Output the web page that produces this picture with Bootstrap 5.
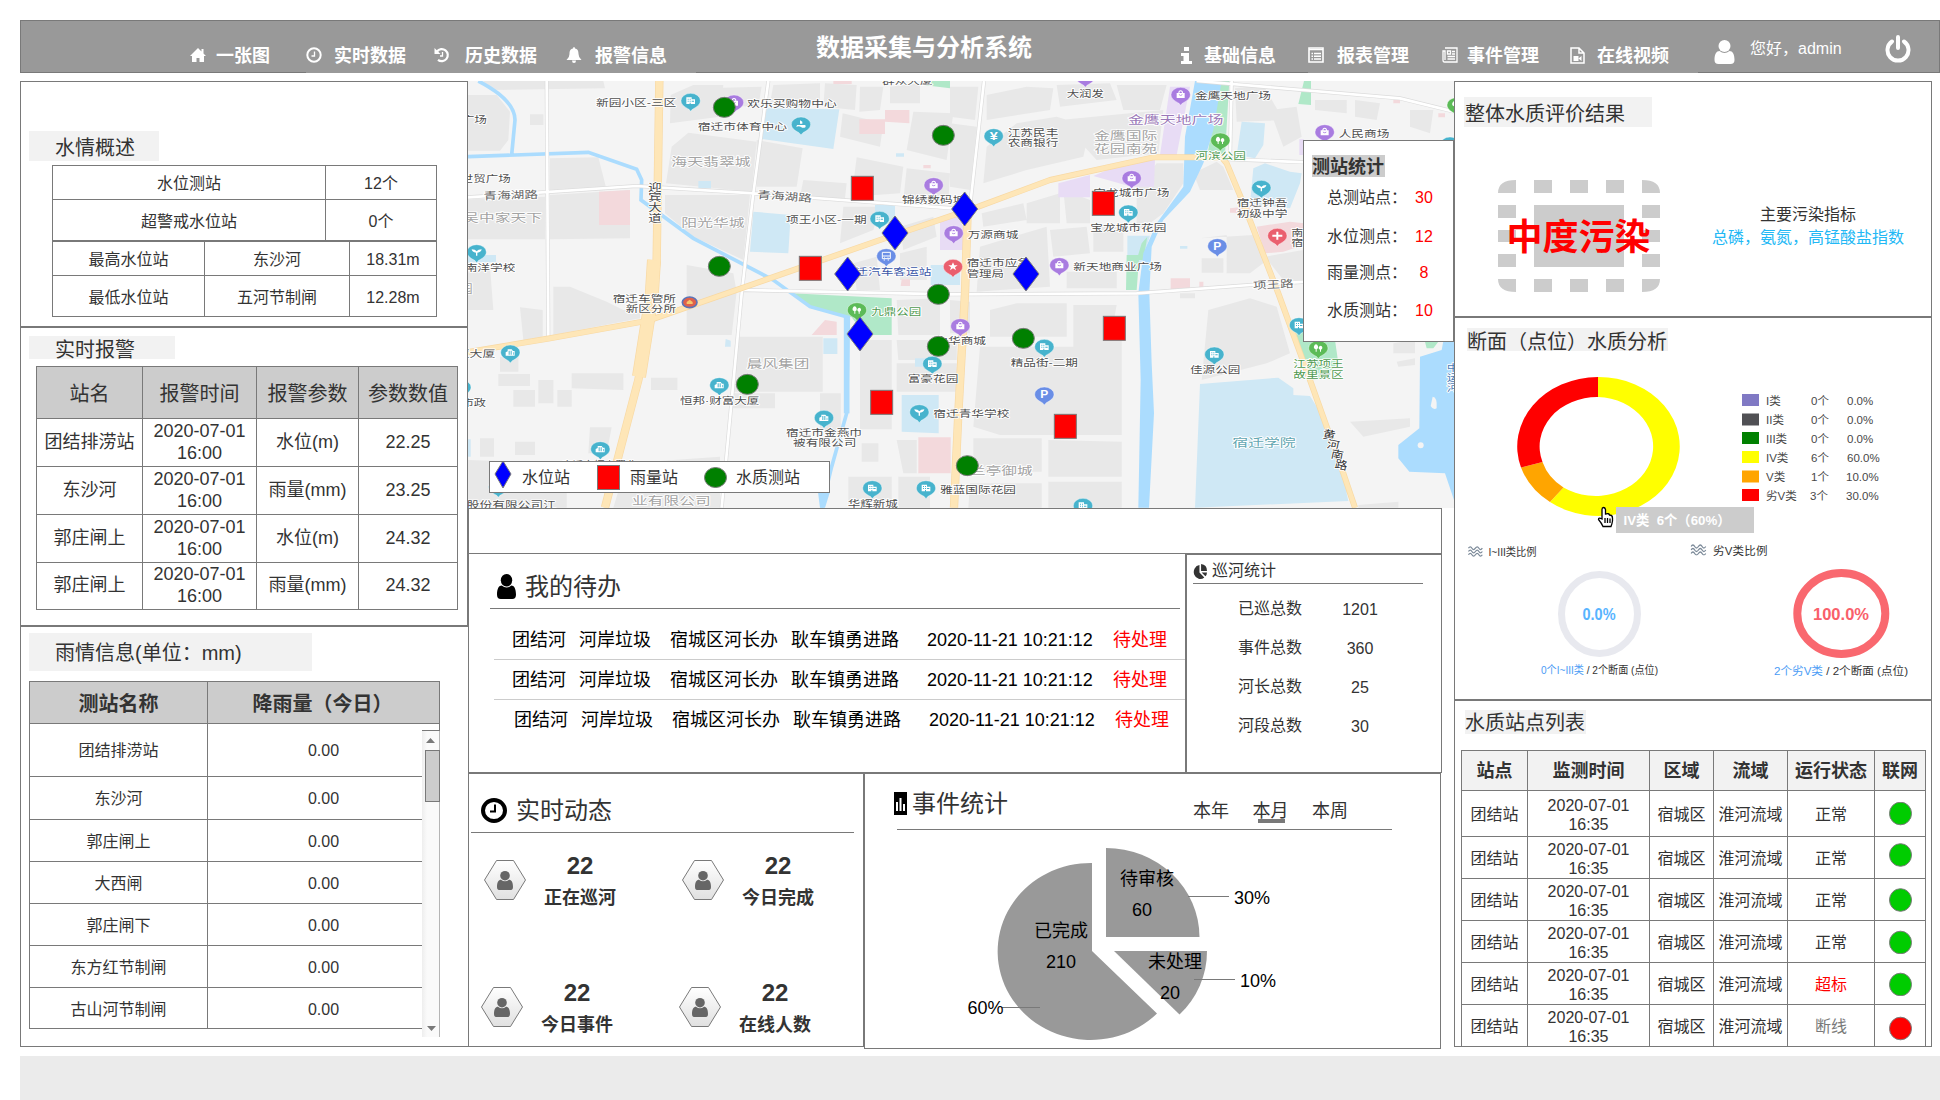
<!DOCTYPE html>
<html lang="zh-CN">
<head>
<meta charset="utf-8">
<title>数据采集与分析系统</title>
<link href="https://cdn.jsdelivr.net/npm/bootstrap@5.3.0/dist/css/bootstrap.min.css" rel="stylesheet">
<style>
:root{--line:#797979}
body{width:1940px;height:1100px;overflow:hidden;background:#fff;color:#333;font:16px/20px "Liberation Sans","Noto Sans CJK SC",sans-serif}
svg{display:block}
svg text{font-family:"Liberation Sans","Noto Sans CJK SC",sans-serif}
.topbar{margin:20px 0 0 20px;width:1920px;height:53px;background:#999;border:1px solid var(--line);color:#fff;display:grid;grid-template-columns:795px 331px 794px;padding:0}
.topnav{display:grid;align-items:center;height:68px;font-size:18px;font-weight:700;white-space:nowrap}
.topnav span{padding-top:2px}
.nav-a{grid-template-columns:26px 90px 28px 100px 31px 101px 29px 74px;padding-left:169px}
.nav-b{grid-template-columns:24px 104px 29px 105px 25px 103px 27px 117px 36px 135px 30px;padding-left:33px}
.nav-a,.nav-b{position:relative}
.nav-a:after,.nav-b:after{content:"";position:absolute;top:51px;height:1px;width:390px;background:#999}
.nav-a:after{left:285px}.nav-b:after{left:161px}
.topnav .hello{font-size:16px;font-weight:400;margin-top:-15px}
.lift{margin-top:-6px}.lift2{margin-top:-13px}
.sysname{font-size:24px;font-weight:700;line-height:54px;white-space:nowrap;height:50px}
.boards{margin:8px 0 0 20px;height:975px}
.pane{border:1px solid var(--line);background:#fff}
.col-l{width:448px}.col-m{width:986px}.col-r{width:478px}
.tag{background:#f2f2f2;font-size:20px;white-space:nowrap;width:max-content}
.lined{border-collapse:separate;border-spacing:1px;background:var(--line);table-layout:fixed;text-align:center}
.lined td,.lined th{background:#fff;padding:2px 0 0;vertical-align:middle;white-space:nowrap}
.lined .hd td,.lined .hd th{background:#ccc;font-size:20px}
.t-level td{line-height:20px}
.lined.t-level tr+tr td{padding-top:4px}
.t-alarm{font-size:18px;line-height:22px}
.lined.t-alarm td{padding:0 0 2px}
.lined.t-alarm .hd td{padding:2px 0 0}
.lined.t-site .hd th{background:#f2f2f2;font-size:18px}
.t-site{line-height:19px}
.t-site svg{margin-top:-2px}
.rainwrap{position:relative;width:411px;margin:10px 0 0 8px}
.sbar{position:absolute;left:393px;top:50px;width:18px;height:306px;background:linear-gradient(90deg,#eee,#fafafa 30%);border-right:1px solid #b5b5b5;box-shadow:0 -1px #797979}
.gone{position:absolute;right:0;top:43px;width:1px;height:8px;background:var(--line)}
.mapbox{width:986px;height:427px;position:relative;overflow:hidden}
.stats{position:absolute;left:835px;top:59px;width:151px;height:202px;padding:14px 0 0 8px}
.stats h6{font-size:18px;font-weight:700;background:#ccc;width:73px;height:22px;line-height:24px;margin:0 0 11px;white-space:nowrap}
.stats .r{display:grid;grid-template-columns:80px 34px;padding-left:15px;height:37.5px;line-height:20px;white-space:nowrap}
.stats b{font-weight:400;color:red;text-align:center}
.legend{position:absolute;left:21px;top:380px;width:341px;height:32px;display:grid;grid-template-columns:32px 75px 33px 74px 32px 66px;line-height:32px;white-space:nowrap}
.spacer{width:974px;height:46px;border-bottom:0}
.todo{width:718px;height:219px}
.patrol{width:256px;height:219px}
.h24{font-size:24px;line-height:28px;white-space:nowrap}
.todo .r{display:grid;grid-template-columns:67px 91px 121px 136px 186px 60px;font-size:18px;color:#000;height:40px;line-height:41px;margin-left:25px;padding-left:18px;border-bottom:1px solid #ccc;white-space:nowrap}
.todo .r:last-child{border:0;padding-left:20px}
.todo .r b{font-weight:400;color:red}
.patrol .r{display:grid;grid-template-columns:84px 76px;margin-left:51px;height:39.2px;align-items:center}
.patrol .r span:last-child{text-align:center;padding-top:2px}
.live{width:396px;height:274px}
.event{width:577px;height:276px}
.who{display:grid;grid-template-columns:42px 108px;height:127px}
.who .n{font-size:24px;font-weight:700;line-height:26px;text-align:center}
.who .l{font-size:18px;font-weight:700;line-height:22px;text-align:center;margin-top:8px;white-space:nowrap}
.tabs3{font-size:18px;width:155px}
.tabs3 span{position:relative;white-space:nowrap}
.tabs3 .on:after{content:"";position:absolute;left:5px;top:18px;width:27px;height:4px;background:var(--line)}
.foot{margin-left:20px;height:44px;background:#ebebeb}
</style>
</head>
<body>
<svg width="0" height="0" class="position-absolute">
<defs>
<symbol id="man" viewBox="0 0 20 24"><ellipse cx="10" cy="6" rx="6" ry="6"/><path d="M0 20C0 14 2 11 5 11Q10 15 15 11C18 11 20 14 20 20Q20 24 16 24H4Q0 24 0 20Z"/></symbol>
<linearGradient id="hexg" x1="0" y1="0" x2="0" y2="1"><stop offset="0" stop-color="#fff"/><stop offset="1" stop-color="#e0e0e0"/></linearGradient>
<symbol id="hex" viewBox="0 0 42 40"><path d="M12.500.5H29.500L41.500 20 29.500 39.500H12.500L.5 20Z" fill="url(#hexg)" stroke="#797979"/><use href="#man" x="13" y="10" width="16" height="21" fill="#666"/></symbol>
<symbol id="wave" viewBox="0 0 16 12"><path d="M.5 3q2-3 3.700 0t3.700 0 3.700 0 3.700 0M.5 6.500q2-3 3.700 0t3.700 0 3.700 0 3.700 0M.5 10q2-3 3.700 0t3.700 0 3.700 0 3.700 0" fill="none" stroke="#7c8a99" stroke-width="1.300"/></symbol>
</defs>
</svg>

<header class="topbar">
  <nav class="topnav nav-a">
    <svg width="16" height="16" viewBox="0 0 16 16" fill="#fff"><path d="M8 1 0 9h2v6h4.500v-4h3v4H14V9h2l-2.500-2.500V2h-2v2.500Z"/></svg><span>一张图</span>
    <svg width="16" height="16" viewBox="0 0 16 16" fill="none" stroke="#fff"><circle cx="8" cy="8" r="6.700" stroke-width="2"/><path d="M8.500 4.500V9H5.500" stroke-width="1.300"/></svg><span>实时数据</span>
    <svg width="16" height="16" viewBox="0 0 16 16" fill="none" stroke="#fff"><path d="M3 4.500A6 6 0 1 1 4 12.800" stroke-width="2.200"/><path d="M.5 1v6h6Z" fill="#fff" stroke="none"/><path d="M8.500 5V9H6" stroke-width="1.300"/></svg><span>历史数据</span>
    <svg width="16" height="16" viewBox="0 0 16 16" fill="#fff"><path d="M8 0Q9 0 9 1.500C12 2 12.500 4.500 12.500 7Q12.500 10.500 15.500 13H.5Q3.500 10.500 3.500 7C3.500 4.500 4 2 7 1.500Q7 0 8 0ZM6 13.500h4Q10 16 8 16T6 13.500Z"/></svg><span>报警信息</span>
  </nav>
  <div class="sysname">数据采集与分析系统</div>
  <nav class="topnav nav-b">
    <svg width="13" height="17" viewBox="0 0 13 17" fill="#fff"><path d="M4 0h5v4H4ZM1 6h8v8h3v3H1v-3h2.500V9H1Z"/></svg><span>基础信息</span>
    <svg width="16" height="16" viewBox="0 0 16 16" fill="none" stroke="#fff"><path d="M1 1h14v14H1Z" stroke-width="1.600"/><path d="M1 2.500h14M3.500 6.500h1.500M6 6.500h7M3.500 9.200h1.500M6 9.200h7M3.500 12h1.500M6 12h7" stroke-width="1.500"/></svg><span>报表管理</span>
    <svg width="16" height="16" viewBox="0 0 16 16" fill="none" stroke="#fff" stroke-width="1.300"><path d="M3 1h12v14H2.500Q1 15 1 13V4h2V13M5.500 4h3v3h-3ZM10 4.500h3M10 7h3M5.500 9.500H13M5.500 12H13"/></svg><span>事件管理</span>
    <svg width="15" height="17" viewBox="0 0 15 17" fill="none" stroke="#fff" stroke-width="1.500"><path d="M1 1h8l5 5v10H1ZM9 1v5h5"/><path d="M3.500 9h5v5h-5ZM8.500 11.500l3-2.500v5Z" fill="#fff" stroke="none"/></svg><span>在线视频</span>
    <svg class="lift" width="21" height="24" fill="#fff"><use href="#man"/></svg><span class="hello">您好，admin</span>
    <svg class="lift2" width="26" height="28" viewBox="0 0 26 28" fill="none" stroke="#fff" stroke-width="4" stroke-linecap="round"><path d="M7 6.500A10.500 10.500 0 1 0 19 6.500M13 2V13"/></svg>
  </nav>
</header>

<main class="boards d-flex align-items-start">
  <section class="col-l">
    <div class="pane" style="height:246px">
      <div class="tag" style="margin:49px 0 4px 8px;width:130px;height:30px;line-height:34px;padding-left:26px">水情概述</div>
      <table class="lined t-level" style="width:385px;margin-left:31px"><colgroup><col style="width:272px"><col></colgroup>
        <tr style="height:33px"><td>水位测站</td><td>12个</td></tr><tr style="height:40px"><td>超警戒水位站</td><td>0个</td></tr></table>
      <table class="lined t-level" style="width:385px;margin-left:31px"><colgroup><col style="width:151px"><col style="width:144px"><col></colgroup>
        <tr style="height:33px"><td>最高水位站</td><td>东沙河</td><td>18.31m</td></tr><tr style="height:40px"><td>最低水位站</td><td>五河节制闸</td><td>12.28m</td></tr></table>
    </div>
    <div class="pane" style="height:299px">
      <div class="tag" style="margin:8px 0 7px 8px;width:146px;height:23px;line-height:28px;padding-left:26px">实时报警</div>
      <table class="lined t-alarm" style="width:422px;margin-left:15px"><colgroup><col style="width:105px"><col style="width:113px"><col style="width:101px"><col></colgroup>
        <tr class="hd" style="height:51px"><td>站名</td><td>报警时间</td><td>报警参数</td><td>参数数值</td></tr>
        <tr style="height:47px"><td>团结排涝站</td><td>2020-07-01<br>16:00</td><td>水位(m)</td><td>22.25</td></tr>
        <tr style="height:47px"><td>东沙河</td><td>2020-07-01<br>16:00</td><td>雨量(mm)</td><td>23.25</td></tr>
        <tr style="height:47px"><td>郭庄闸上</td><td>2020-07-01<br>16:00</td><td>水位(m)</td><td>24.32</td></tr>
        <tr style="height:46px"><td>郭庄闸上</td><td>2020-07-01<br>16:00</td><td>雨量(mm)</td><td>24.32</td></tr>
      </table>
    </div>
    <div class="pane border-end-0" style="height:421px">
      <div class="tag" style="margin:6px 0 0 8px;width:283px;height:38px;line-height:41px;padding-left:26px">雨情信息(单位：mm)</div>
      <div class="rainwrap">
        <table class="lined" style="width:411px"><colgroup><col style="width:177px"><col></colgroup>
          <tr class="hd" style="height:41px"><th>测站名称</th><th style="padding-right:2px">降雨量（今日）</th></tr></table>
        <table class="lined" style="width:395px;margin-top:-1px"><colgroup><col style="width:177px"><col></colgroup>
          <tr style="height:52px"><td>团结排涝站</td><td style="padding-left:16px">0.00</td></tr>
          <tr style="height:42px"><td>东沙河</td><td style="padding-left:16px">0.00</td></tr>
          <tr style="height:41px"><td>郭庄闸上</td><td style="padding-left:16px">0.00</td></tr>
          <tr style="height:41px"><td>大西闸</td><td style="padding-left:16px">0.00</td></tr>
          <tr style="height:41px"><td>郭庄闸下</td><td style="padding-left:16px">0.00</td></tr>
          <tr style="height:41px"><td>东方红节制闸</td><td style="padding-left:16px">0.00</td></tr>
          <tr style="height:40px"><td style="padding-top:4px">古山河节制闸</td><td style="padding:4px 0 0 16px">0.00</td></tr>
        </table>
        <i class="gone"></i>
        <div class="bg-white position-absolute" style="left:393px;top:43px;width:17px;height:7px"></div>
        <div class="sbar"><svg width="18" height="306"><path d="M4 12l4.500-5 4.500 5ZM5 295h9l-4.500 5Z" fill="#797979"/><rect x="3.500" y="19.500" width="14" height="51" fill="#ccc" stroke="#797979"/></svg></div>
      </div>
    </div>
  </section>

  <section class="col-m">
    <div class="mapbox">
      <svg width="986" height="427" viewBox="468 81 986 427">
        <rect x="468" y="81" width="986" height="427" fill="#f4f4f4"/>
        <g transform="translate(460 80) scale(.333333)">
          <g fill="#e8e8e8">
            <path d="M70 3H430L435 25 90 30ZM24 45H110L150 95 145 180 120 212H24ZM210 103H250V135H210ZM270 235 415 232 440 330 270 335ZM24 358 255 350V478H24ZM270 345 510 330V475L270 478ZM24 545 90 560 100 690H24ZM280 620H330L440 665 490 690 540 690V715L280 765ZM180 682 248 690V770L190 780Z"/>
            <path d="M635 200 685 158 890 185 875 335 618 310ZM615 345 870 345 850 540 700 470 615 400ZM680 555 820 580 830 635 815 765H680ZM835 770H1088V935H815ZM115 882H210V918H115ZM335 880H490V930L335 925ZM573 893H652V930H573ZM160 930H225V980H160ZM235 900H280V970H235ZM292 930H335V980H292ZM120 830H175V875H120ZM165 1085H225V1125H165ZM390 1042H455L440 1120H385ZM60 1075H102V1130H60Z"/>
            <path d="M632 45 700 15 790 15 780 110 630 130ZM730 25 905 20 895 80 735 75ZM940 15 1080 10 1080 60 1000 85 930 70ZM1095 10 1190 15 1185 90 1090 80ZM1200 20H1270L1260 90 1198 95ZM1290 20 1380 10V70H1290ZM1148 100 1270 130 1260 200 1140 170ZM1360 95 1480 100 1460 240 1340 210ZM890 180 1028 205 1010 320 890 320ZM1190 232 1330 260 1320 340 1175 350ZM1340 265 1470 280 1465 365 1330 360ZM1030 300 1160 310 1155 355 1020 350ZM1150 380 1260 380 1240 450 1140 490ZM1320 440 1420 410 1430 470 1330 510ZM1180 550 1250 530 1260 630 1190 630ZM1320 520 1400 500V600H1320ZM1310 660 1440 655V765H1315ZM1310 780H1490V840H1315ZM1200 780H1295V1048H1200ZM1310 850H1490V935H1310ZM1080 940H1142V1055H1080ZM820 940H945V985H810ZM500 1150 780 1130V1283H460ZM820 1165 1080 1165V1210H820ZM1165 1190H1295V1275H1165ZM1315 1190H1410V1283H1315ZM24 1140 320 1150V1283H24ZM1310 1080H1370V1180H1330ZM1205 1090H1255V1145H1205Z"/>
          </g>
          <path d="M417 335 510 330V435H417ZM1198 118H1275V162H1198ZM1275 90H1348V130L1275 125ZM1375 1072H1472V1180H1375ZM1095 720 1130 725V765H1055ZM1325 598H1350V618H1322ZM1120 3H1175V12H1120ZM1390 255H1412V265H1390Z" fill="#f3d9dc"/>
          <path d="M920 85 1138 88 1120 207 905 177ZM1325 945H1436V1060L1325 1055ZM1245 375H1305V430H1245ZM1090 775H1132V822H1090ZM1412 555H1500V615H1412ZM24 525H108V547H24ZM880 395 992 405 985 520 870 515ZM715 303H753V325H715ZM1308 220H1332V230H1308ZM1365 835H1400V860H1365ZM797 777 812 782V800H795ZM24 1078H32V1130H24Z" fill="#cfe8f5"/>
          <path d="M995 640 1295 655V765H1215L1175 712 1050 680ZM1390 3H1470V25L1390 15Z" fill="#b0e8c8"/>
          <path d="M55 3Q165 60 165 120L155 225M24 230 385 217 530 268 545 300 543 360 700 475 940 600 1050 680 1165 712 1160 1000 1115 1160 1085 1283" fill="none" stroke="#abdcfe" stroke-width="11"/>
          <path d="M1160 712V1000" stroke="#abdcfe" stroke-width="17"/><path d="M1072 1220 1110 1235 1095 1283H1080Z" fill="#abdcfe"/>

          <g transform="translate(1470 0)">
            <g fill="#e8e8e8">
              <path d="M0 20 85 20 75 120 0 110ZM0 130 80 140 60 330 0 320ZM110 45 230 20 310 25 300 90 110 120ZM320 15 480 10 500 60 330 80ZM500 15 650 15 630 90 520 90ZM110 200 200 130 320 110 420 140 400 230 230 270 100 310ZM330 120 640 90 625 220 440 240ZM730 280 800 245 820 260 850 330 750 330ZM620 250 700 250 700 310 640 400 560 460 560 330ZM855 25 940 15 1000 120 860 125ZM960 90 1040 80 1055 170 1000 200ZM1095 60 1190 60 1190 100 1095 90ZM1215 60 1290 70 1280 120 1215 110ZM1380 90 1450 90 1440 160 1380 140ZM95 400 220 370 230 420 100 440ZM230 370 330 340 330 430 230 430ZM340 330 420 360 420 430 350 430ZM90 500 290 440 300 620 80 635ZM300 450 410 440 420 520 310 530ZM430 440 520 440 520 515 430 515ZM350 575 500 575V625H350ZM120 690 200 670H350V770H120ZM370 675H500L490 730 515 735V1065H150L70 1040 90 800H370Z"/>
              <path d="M70 1075H275V1175H70ZM295 1080 515 1085V1190H295ZM295 1205H515V1283H295ZM60 1210H275V1283H55ZM750 475 910 465 945 545 900 580 830 580 830 465ZM755 535H820V578H755ZM690 640H735V655H690ZM775 690 900 655 980 680 1020 820 950 850 755 900ZM945 530 1060 510V600H1000ZM1330 790 1395 780V820H1330ZM1200 1025 1380 1015V1040L1240 1070ZM1340 845 1395 835V855L1345 860ZM1155 1215 1190 1205V1240H1160ZM1225 1275 1345 1265V1283H1225ZM0 660 60 665V760H0Z"/>
            </g>
            <path d="M660 20H720L680 225H630ZM430 288 540 240H615L612 320H545ZM325 310 420 285V352H325ZM-30 420 20 400 45 450V510H-30ZM1048 178H1062V225H1048Z" fill="#e8dcf5"/>
            <path d="M875 125 945 130 940 195 915 235 860 225ZM910 265 945 250 1020 275 1055 280 1050 310 1020 385 900 370ZM750 912 985 893 1030 925V945L1080 948 1150 1060 1195 1263 735 1283ZM532 467H600L570 560 532 525ZM690 498H712V506H690Z" fill="#cfe8f5"/>
            <path d="M920 440 1020 425 1062 430V495L1000 515 945 520ZM662 595H720V625L662 628ZM840 385 900 378V400L840 398ZM748 605H760V622H748ZM1465 100H1485V112H1465ZM1330 60H1350V70H1330Z" fill="#f3d9dc"/>
            <path d="M808 3H838L825 225 770 240ZM1062 3H1083V75L1045 72ZM530 525H568L560 630H528ZM575 490 592 470 580 540H560ZM1035 750 1155 780 1165 850 1120 895 1080 900ZM1425 785H1465L1450 805H1430Z" fill="#b0e8c8"/>
            <path d="M735 3H815L790 150 760 250 720 335 640 420 605 500 598 640 605 850 612 1000 597 1283H565L572 900 565 640 580 520 620 430 700 320 705 170ZM1512 783H1480L1475 810 1410 830 1408 1045 1345 1095V1135L1378 1175 1485 1180 1512 1260Z" fill="#abdcfe"/>
            <path d="M1448 950Q1462 950 1460 985 1450 992 1442 978Z" fill="#f4f4f4"/><circle cx="1412" cy="1096" r="9" fill="#f4f4f4"/>
          </g>

          <path d="M260 3 265 770M24 352 530 318 880 340 1480 385M925 3 880 340 845 640 785 1283M850 630 1470 643 2030 640 2370 615 2540 605M1572 3 1530 380M2315 3 2310 230M2210 3 2820 55 2982 95M2290 237 2540 247" fill="none" stroke="#dcdcdc" stroke-width="12"/>
          <path d="M260 3 265 770M24 352 530 318 880 340 1480 385M925 3 880 340 845 640 785 1283M850 630 1470 643 2030 640 2370 615 2540 605M1572 3 1530 380M2315 3 2310 230M2210 3 2820 55 2982 95M2290 237 2540 247" fill="none" stroke="#fff" stroke-width="8"/>
          <g fill="none" stroke="#f8d9a4" stroke-linejoin="round">
            <path d="M598 3 590 540 570 720 535 900 435 1283" stroke-width="25"/><path d="M582 540 575 650 537 890" stroke-width="42"/>
            <path d="M24 816 270 775 565 722 800 640 1260 480 1555 380 1770 300 2080 232H2285L2300 250 2350 370 2455 640 2550 900 2650 1180 2685 1283" stroke-width="18"/><path d="M1523 390 1515 640 1495 1000 1482 1283" stroke-width="25"/>
          </g>
          <g fill="none" stroke="#fee6b7" stroke-linejoin="round">
            <path d="M598 3 590 540 570 720 535 900 435 1283" stroke-width="21"/><path d="M582 540 575 650 537 890" stroke-width="38"/>
            <path d="M24 816 270 775 565 722 800 640 1260 480 1555 380 1770 300 2080 232H2285L2300 250 2350 370 2455 640 2550 900 2650 1180 2685 1283" stroke-width="14"/><path d="M1523 390 1515 640 1495 1000 1482 1283" stroke-width="21"/>
          </g>
          <g id="pins"></g>
          <g id="names" stroke="#fff" stroke-width="5" paint-order="stroke" stroke-linejoin="round"></g>
          <g id="marks" stroke="#797979" stroke-width="3"></g>
        </g>
      </svg>
      <div class="stats pane"><h6>测站统计</h6>
        <div class="r"><span>总测站点：</span><b>30</b></div><div class="r" style="padding-top:1px"><span>水位测点：</span><b>12</b></div><div class="r"><span>雨量测点：</span><b>8</b></div><div class="r"><span>水质测站：</span><b>10</b></div></div>
      <div class="legend pane">
        <svg width="32" height="30" overflow="visible"><path d="M13-1 21 12 13 26 5 12Z" fill="#00f" stroke="#797979"/></svg><span>水位站</span>
        <svg width="33" height="30"><rect x=".5" y="3.500" width="22" height="24" fill="red" stroke="#797979"/></svg><span>雨量站</span>
        <svg width="32" height="30"><ellipse cx="11.500" cy="15.500" rx="11" ry="10" fill="green" stroke="#797979"/></svg><span>水质测站</span>
      </div>
    </div>
    <div class="pane spacer"></div>
    <div class="d-flex" style="width:974px;margin-top:-1px">
      <div class="pane todo" style="height:220px">
        <div class="d-flex" style="padding:19px 0 0 28px;height:54px"><svg width="19" height="25" viewBox="0 0 20 24" preserveAspectRatio="none" class="me-2" style="margin-top:1px"><use href="#man" width="20" height="24"/></svg><span class="h24" style="margin-left:1px">我的待办</span></div>
        <div style="border-top:1px solid #797979;margin:0 5px 11px 21px"></div>
        <div class="r"><span>团结河</span><span>河岸垃圾</span><span>宿城区河长办</span><span>耿车镇勇进路</span><span>2020-11-21 10:21:12</span><b>待处理</b></div>
        <div class="r"><span>团结河</span><span>河岸垃圾</span><span>宿城区河长办</span><span>耿车镇勇进路</span><span>2020-11-21 10:21:12</span><b>待处理</b></div>
        <div class="r"><span>团结河</span><span>河岸垃圾</span><span>宿城区河长办</span><span>耿车镇勇进路</span><span>2020-11-21 10:21:12</span><b>待处理</b></div>
      </div>
      <div class="pane patrol" style="height:220px;border-top-width:2px">
        <div class="d-flex align-items-center" style="padding:4px 0 0 6px;height:28px"><svg width="14" height="15" viewBox="0 0 13 14" fill="#333" preserveAspectRatio="none"><path d="M6 1V8L10.500 12.500A6 6.500 0 1 1 6 1ZM7.500 0Q13 .5 13 6.500H7.500ZM8 8h5Q13 10 11.500 11.500Z"/></svg><span style="margin-left:5px">巡河统计</span></div>
        <div style="border-top:1px solid #797979;margin:0 18px 5px 6px"></div>
        <div class="r"><span>已巡总数</span><span>1201</span></div><div class="r"><span>事件总数</span><span>360</span></div><div class="r"><span>河长总数</span><span>25</span></div><div class="r"><span>河段总数</span><span>30</span></div>
      </div>
    </div>
    <div class="d-flex align-items-start">
      <div class="pane live">
        <div class="d-flex" style="padding:24px 0 0 12px;height:58px"><svg width="26" height="25" viewBox="0 0 26 25" fill="none" stroke="#000"><ellipse cx="13" cy="12.500" rx="11" ry="10.500" stroke-width="4"/><path d="M14 6.500V13.500H9" stroke-width="2"/></svg><span class="h24" style="margin-left:9px;line-height:26px">实时动态</span></div>
        <div style="border-top:1px solid #797979;margin:0 9px 20px 2px"></div>
        <div class="d-flex" style="padding-left:15px">
          <div class="who" style="width:198px"><svg width="42" height="40" style="margin-top:7px"><use href="#hex"/></svg><div><div class="n">22</div><div class="l">正在巡河</div></div></div>
          <div class="who"><svg width="42" height="40" style="margin-top:7px"><use href="#hex"/></svg><div><div class="n">22</div><div class="l">今日完成</div></div></div>
        </div>
        <div class="d-flex" style="padding-left:12px">
          <div class="who" style="width:198px;height:60px"><svg width="42" height="40" style="margin-top:7px"><use href="#hex"/></svg><div><div class="n">22</div><div class="l">今日事件</div></div></div>
          <div class="who" style="height:60px"><svg width="42" height="40" style="margin-top:7px"><use href="#hex"/></svg><div><div class="n">22</div><div class="l">在线人数</div></div></div>
        </div>
      </div>
      <div class="pane event">
        <div class="d-flex" style="padding:18px 91px 0 29px;height:55px"><svg width="13" height="23" viewBox="0 0 13 23"><path d="M0 0H13V23H0Z"/><path d="M2 10H4V19H2ZM5.500 6H7.500V19H5.500ZM9 12H11V19H9Z" fill="#fff"/></svg><span class="h24 me-auto" style="margin-left:5px;line-height:24px">事件统计</span><div class="tabs3 d-flex justify-content-between" style="margin:9px 1px 0 0"><span>本年</span><span class="on">本月</span><span>本周</span></div></div>
        <div style="border-top:1px solid #797979;margin:0 48px 0 32px"></div>
        <svg width="575" height="216" viewBox="865 830 575 216" font-size="18">
          <g fill="#999"><path d="M1092 951V863A93 88.500 0 1 0 1157 1013.500Z"/><path d="M1106 937V848A93.500 89 0 0 1 1199.500 937Z"/><path d="M1114 951H1207A93 89 0 0 1 1179.500 1014.500Z"/></g>
          <path d="M1188 896.500H1229M1194 979.500H1235M1002 1007.500H1040" stroke="#797979"/>
          <g text-anchor="middle"><text x="1147" y="885">待审核</text><text x="1142" y="916">60</text><text x="1061" y="936.500">已完成</text><text x="1061" y="968">210</text><text x="1175" y="968">未处理</text><text x="1170" y="999">20</text><text x="1252" y="904">30%</text><text x="1258" y="987">10%</text><text x="985.500" y="1014">60%</text></g>
        </svg>
      </div>
    </div>
  </section>

  <section class="col-r">
    <div class="pane d-flex align-items-start" style="height:236px">
      <div style="padding:15px 0 0 9px;width:257px">
        <div class="tag" style="width:188px;height:30px;line-height:34px;padding-left:1px">整体水质评价结果</div>
        <svg width="170" height="120" viewBox="1494 178 170 120" style="margin:51px 0 0 30px" overflow="visible"><path d="M1498 193Q1498 180 1516 180V193ZM1642 180Q1660 180 1660 193H1642ZM1498 279H1516V292Q1498 292 1498 279ZM1642 279H1660Q1660 292 1642 292ZM1534 180h18v13h-18ZM1570 180h18v13h-18ZM1606 180h18v13h-18ZM1534 279h18v13h-18ZM1570 279h18v13h-18ZM1606 279h18v13h-18ZM1498 205h18v13h-18ZM1498 230h18v12h-18ZM1498 254h18v13h-18ZM1642 205h18v13h-18ZM1642 230h18v12h-18ZM1642 254h18v13h-18ZM1534 205h90v62h-90Z" fill="#ccc"/><text x="1578.500" y="250" text-anchor="middle" font-size="36" font-weight="700" fill="red">中度污染</text></svg>
      </div>
      <div class="text-center text-nowrap" style="margin-top:120px;line-height:23px;width:194px"><div style="margin-left:-2px;padding-top:1px">主要污染指标</div><div style="color:#22b8f5;margin-left:-2px">总磷，氨氮，高锰酸盐指数</div></div>
    </div>
    <div class="pane" style="height:383px">
      <div class="tag" style="margin:10px 0 0 12px;width:201px;height:23px;line-height:28px">断面（点位）水质分析</div>
      <svg width="476" height="345" viewBox="1455 351 476 345">
        <path d="M1598 377A81 69.500 0 1 1 1550 502L1563.500 487.500A57.500 49.500 0 1 0 1598 397Z" fill="#ff0"/><path d="M1550 502A81 69.500 0 0 1 1521 467.500L1542.500 462A57.500 49.500 0 0 0 1563.500 487.500Z" fill="orange"/><path d="M1521 467.500A81 69.500 0 0 1 1598 377V397A57.500 49.500 0 0 0 1542.500 462Z" fill="red"/>
        <path d="M1742 394h17v12h-17Z" fill="#8079c4"/><path d="M1742 413.500h17v12h-17Z" fill="#505054"/><path d="M1742 432h17v12h-17Z" fill="green"/><path d="M1742 451h17v12h-17Z" fill="#ff0"/><path d="M1742 470.500h17v12h-17Z" fill="orange"/><path d="M1742 489h17v12h-17Z" fill="red"/>
        <g font-size="11.500" fill="#484848"><text x="1766" y="405">I类</text><text x="1811" y="405">0个</text><text x="1847" y="405">0.0%</text><text x="1766" y="424">II类</text><text x="1811" y="424">0个</text><text x="1847" y="424">0.0%</text><text x="1766" y="443">III类</text><text x="1811" y="443">0个</text><text x="1847" y="443">0.0%</text><text x="1766" y="462">IV类</text><text x="1811" y="462">6个</text><text x="1847" y="462">60.0%</text><text x="1766" y="481">V类</text><text x="1811" y="481">1个</text><text x="1846" y="481">10.0%</text><text x="1766" y="500">劣V类</text><text x="1810" y="500">3个</text><text x="1846" y="500">30.0%</text></g>
        <path d="M1616 507h138v26h-138Z" fill="#ccc"/><text x="1623.500" y="525" font-size="13.500" font-weight="700" fill="#fff" xml:space="preserve" textLength="107" lengthAdjust="spacingAndGlyphs">IV类  6个（60%）</text>
        <path d="M1602 519V509.500Q1602 507.500 1603.500 507.500T1605.500 509.500V514Q1609 513 1609.500 515 1612.500 515 1612.500 518V521Q1612 524 1611 526.500H1603Q1601.500 523 1598.500 519.500 1598.500 517 1602 519ZM1605 518V523M1607.500 518V523M1610 518.500V523" fill="#fff" stroke="#000" stroke-width="1.300"/>
        <use href="#wave" x="1468" y="545" width="15" height="12"/><text x="1488.500" y="556" font-size="11" textLength="48" lengthAdjust="spacingAndGlyphs" fill="#333">I~III类比例</text>
        <use href="#wave" x="1690.500" y="543.500" width="16" height="12"/><text x="1713" y="554.500" font-size="11.500" textLength="54.500" fill="#333">劣V类比例</text>
        <ellipse cx="1599.500" cy="614" rx="38" ry="39.500" fill="none" stroke="#e8e9ef" stroke-width="7"/><ellipse cx="1841.300" cy="613.500" rx="44" ry="40.500" fill="none" stroke="#f9686f" stroke-width="8"/>
        <g font-weight="700" text-anchor="middle"><text x="1599" y="619.500" font-size="16" textLength="33" lengthAdjust="spacingAndGlyphs" fill="#58b4ff">0.0%</text><text x="1841" y="619.500" font-size="16" textLength="56" lengthAdjust="spacingAndGlyphs" fill="#f9606a">100.0%</text></g>
        <text x="1541" y="674" font-size="11" textLength="117" lengthAdjust="spacingAndGlyphs" fill="#333"><tspan fill="#4b9cf5">0个I~III类</tspan> / 2个断面 (点位)</text>
        <text x="1774" y="675" font-size="11.500" textLength="134" lengthAdjust="spacingAndGlyphs" fill="#333"><tspan fill="#4b9cf5">2个劣V类</tspan> / 2个断面 (点位)</text>
      </svg>
    </div>
    <div class="pane" style="height:347px">
      <div class="tag" style="margin:9px 0 16px 10px;width:121px;height:24px;line-height:27px">水质站点列表</div>
      <table class="lined t-site" style="width:465px;margin-left:6px"><colgroup><col style="width:65px"><col style="width:121px"><col style="width:63px"><col style="width:73px"><col style="width:86px"><col></colgroup>
        <tr class="hd" style="height:39px"><th>站点</th><th>监测时间</th><th>区域</th><th>流域</th><th>运行状态</th><th>联网</th></tr>
        <tr style="height:45px"><td>团结站</td><td>2020-07-01<br>16:35</td><td>宿城区</td><td>淮河流域</td><td>正常</td><td><svg class="mx-auto" width="23" height="24"><ellipse cx="11.500" cy="11.500" rx="11" ry="11.300" fill="#0c0" stroke="#797979"/></svg></td></tr>
        <tr style="height:41px"><td>团结站</td><td>2020-07-01<br>16:35</td><td>宿城区</td><td>淮河流域</td><td>正常</td><td><svg class="mx-auto" width="23" height="29" viewBox="0 3 23 29" overflow="visible"><ellipse cx="11.500" cy="15" rx="11" ry="11.300" fill="#0c0" stroke="#797979"/></svg></td></tr>
        <tr style="height:41px"><td>团结站</td><td>2020-07-01<br>16:35</td><td>宿城区</td><td>淮河流域</td><td>正常</td><td><svg class="mx-auto" width="23" height="24"><ellipse cx="11.500" cy="12" rx="11" ry="11.300" fill="#0c0" stroke="#797979"/></svg></td></tr>
        <tr style="height:41px"><td>团结站</td><td>2020-07-01<br>16:35</td><td>宿城区</td><td>淮河流域</td><td>正常</td><td><svg class="mx-auto" width="23" height="24"><ellipse cx="11.500" cy="12.500" rx="11" ry="11.300" fill="#0c0" stroke="#797979"/></svg></td></tr>
        <tr style="height:41px"><td>团结站</td><td>2020-07-01<br>16:35</td><td>宿城区</td><td>淮河流域</td><td style="color:red">超标</td><td><svg class="mx-auto" width="23" height="24"><ellipse cx="11.500" cy="12.500" rx="11" ry="11.300" fill="#0c0" stroke="#797979"/></svg></td></tr>
        <tr style="height:41px"><td>团结站</td><td>2020-07-01<br>16:35</td><td>宿城区</td><td>淮河流域</td><td style="color:#797979">断线</td><td><svg class="mx-auto" width="23" height="24" overflow="visible"><ellipse cx="11.500" cy="14.500" rx="11" ry="11.300" fill="red" stroke="#797979"/></svg></td></tr>
      </table>
    </div>
  </section>
</main>
<footer class="foot"></footer>

<script src="https://cdn.jsdelivr.net/npm/bootstrap@5.3.0/dist/js/bootstrap.bundle.min.js"></script>
<script>
// Glyphs drawn in white inside the place pins
const glyph = {
  h: 'M-13-10H3V-4H13V10H-13ZM-9-6V-3H-6V-6ZM-3-6V-3H0V-6ZM-9 0V3H-6V0ZM-3 0V3H0V0ZM3 0V3H10V0ZM-3 6V10H0V6Z',
  b: 'M-14 10V0L-8-3V-9H4L8-4H13V10ZM-5-5V7H-2V-5ZM1-5V7H4V-5ZM8 0V7H10V0Z',
  g: 'M-12-5H-7Q-7-13 0-13T7-5H12V10H-12ZM-4-5H4Q4-10 0-10T-4-5ZM-6-1Q0 8 6-1L4-1Q0 4-4-1Z',
  l: 'M-2 11V2Q-14 1-15-8Q-4-8 0-2Q4-8 15-8Q14 1 2 2V11Z',
  s: 'M0-13 4-4 14-4 6 2 9 11 0 5-9 11-6 2-14-4-4-4Z',
  c: 'M-3-12H3V-3H15V3H3V12H-3V3H-15V-3H-3Z',
  t: 'M-8 11V4Q-15 2-13-5-11-11-7-11T-1-5Q1 2-5 4V11ZM5 11V5Q0 4 1-2 3-7 7-7T12-2Q13 4 8 5V11Z',
  w: 'M-14 8Q-7 3 0 8T14 8L13 2H-12ZM-3-2V-12L4-8V-2Z'
};
const tone = {T:'#47b3cd', P:'#a97ce0', B:'#6a8ee6', R:'#ea5f6e', G:'#5cbb57'};
const pins = [
  ['T',692,62,'h'],['T',1023,133,'w'],['P',822,67,'g'],['P',1421,315,'g'],['T',1259,416,'h'],['B',1279,528,'bus'],['P',1481,459,'g'],['R',1479,560,'s'],
  ['G',1191,690,'t'],['P',1501,738,'g'],['T',1417,851,'h'],['T',778,915,'b'],['T',50,516,'l'],['T',151,817,'b'],['T',421,1107,'b'],['T',1092,1013,'b'],
  ['T',1378,996,'l'],['T',1237,1224,'h'],['T',1398,1224,'h'],['T',115,1220,'h'],['T',4,922,'h'],
  ['P',1876,-10,'g'],['P',2162,44,'g'],['T',1601,168,'¥'],['G',2281,181,'t'],['P',2594,156,'g'],['P',2015,294,'g'],['T',2005,397,'h'],['T',2404,323,'l'],
  ['P',1798,555,'g'],['B',2272,498,'P'],['B',1753,943,'P'],['R',2452,467,'c'],['T',1753,800,'h'],['T',2263,823,'h'],['T',2517,735,'h'],['G',2575,804,'t'],
  ['G',2990,75,'t'],['T',1869,1277,'h'],['T',2970,193,'h']
];
document.getElementById('pins').innerHTML = pins.map(([c,x,y,k]) =>
  `<g transform="translate(${x} ${y})"><path d="M-29 0A29 22 0 0 1 29 0C29 14 12 22 6 25L0 32-6 25C-12 22-29 14-29 0Z" fill="${tone[c]}" stroke="#fff" stroke-opacity=".6" stroke-width="2"/>` +
  (k === 'bus' ? '<path d="M-12-11H12V8H-12ZM-8 12H-4M4 12H8M-11 0H11M-6 4H-4M4 4H6" fill="none" stroke="#fff" stroke-width="3"/>'
   : glyph[k] ? `<path d="${glyph[k]}" fill="#fff" fill-rule="evenodd"/>`
   : `<text y="11" font-size="30" font-weight="700" fill="#fff" text-anchor="middle" textLength="24" lengthAdjust="spacingAndGlyphs">${k}</text>`) + '</g>').join('') +
  '<ellipse cx="689" cy="667" rx="22" ry="16" fill="#e0614a" stroke="#5a74b8" stroke-width="5"/><path d="M680 672V666L689 659 698 666V672Z" fill="#f6c56a"/>';

// Place names: text, left, centre line, width, size, colour
const D='#4f4f4f', L='#a3a3a3', V='#9a78b8', N='#4f9a50';
const names = [
  ['新园小区-三区',408,66,241,29,D],['欢乐买购物中心',862,70,268,29,D],['宿迁市体育中心',713,138,268,29,D],['海天翡翠城',634,244,238,34,L],['广场',5,117,76,29,D],['世贸广场',2,295,150,29,D],
  ['吴中家天下',10,413,236,34,L],['阳光华城',664,428,190,34,L],['锦绣数码城',1326,358,190,29,D],['项王小区-一期',978,419,242,29,D],['迁汽车客运站',1186,573,228,29,'#3b57a8'],['南洋学校',14,561,152,29,D],
  ['园',0,625,38,34,L],['宿迁车管所',458,655,190,29,D],['新区分所',497,686,151,29,D],['九鼎公园',1234,694,150,29,N],['晨风集团',860,852,188,34,L],['富豪花园',1343,894,152,29,D],['恒邦·财富大厦',660,961,238,29,D],
  ['厦大厦',-10,820,116,29,D],['市政',5,967,73,29,D],['宿迁市金燕巾',978,1057,228,29,D],['被有限公司',999,1088,190,29,D],['宿迁青华学校',1420,1001,228,29,D],['宿迁市恒力置业',306,1152,224,29,D],['股份有限公司江',20,1273,268,29,D],['业有限公司',516,1263,236,34,L],['华辉新城',1163,1269,150,29,D],['雅蓝国际花园',1440,1228,228,29,D],['群众大厦',1266,0,152,29,D],
  ['大润发',1820,39,112,29,D],['金鹰天地广场',2205,47,228,29,D],['金鹰天地广场',2004,118,286,34,V],['金鹰国际',1902,168,190,34,L],['花园南苑',1902,206,190,34,L],['江苏民丰',1643,156,152,29,D],['农商银行',1643,187,152,29,D],['河滨公园',2206,225,152,29,N],['人民商场',2636,160,152,29,D],
  ['宝龙城市广场',1900,338,228,29,D],['宝龙城市花园',1891,442,228,29,D],['宿迁钟吾',2330,368,152,29,D],['初级中学',2330,399,152,29,D],['万源商城',1523,462,152,29,D],['宿迁市应急',1520,548,190,29,D],['管理局',1520,579,112,29,D],['新天地商业广场',1840,559,266,29,D],['南',2494,456,36,29,D],['宿',2494,487,36,29,D],['中华商城',1426,782,152,29,D],['精品街-二期',1652,846,202,29,D],['佳源公园',2190,868,151,29,D],
  ['江苏项王',2500,850,151,29,N],['故里景区',2500,882,151,29,N],['宿迁学院',2317,1088,190,34,'#63a7b2'],['兰亭御城',1530,1173,188,34,L]
];
const label = ([t,x,y,w,s,c]) => `<text x="${x}" y="${y + s*.37}" font-size="${s}" fill="${c}" textLength="${w}" lengthAdjust="spacingAndGlyphs">${t}</text>`;
const turned = (t,x,y,w,s,a,c='#666') => `<g transform="translate(${x} ${y}) rotate(${a})">${label([t,0,0,w,s,c])}</g>`;
document.getElementById('names').innerHTML = names.map(label).join('') +
  turned('青海湖路',70,348,164,31,-2) + turned('青海湖路',892,343,164,31,4) + turned('项王路',2379,616,122,31,-3) +
  [...'迎宾大道'].map((t,i) => label([t,565,321+i*31,40,31,'#444'])).join('') +
  [...'黄河南路'].map((t,i) => turned(t,2589+i*12,1060+i*30,38,34,12,'#333')).join('') +
  [...'中运河'].map((t,i) => label([t,2960,862+i*30,38,29,'#4e80b8'])).join('');

const marks = {
  circle: [[793,82],[1450,166],[778,559],[1435,643],[862,913],[1435,799],[1690,775],[1522,1157]],
  square: [[1207,325],[1051,565],[1265,967],[1930,370],[1963,745],[1816,1039]],
  diamond: [[1305,459],[1163,582],[1200,762],[1514,387],[1698,582]]
};
document.getElementById('marks').innerHTML =
  marks.circle.map(([x,y]) => `<ellipse cx="${x}" cy="${y}" rx="33" ry="30" fill="green"/>`).join('') +
  marks.square.map(([x,y]) => `<rect x="${x-33}" y="${y-36}" width="66" height="72" fill="red"/>`).join('') +
  marks.diamond.map(([x,y]) => `<path d="M${x} ${y-51}L${x+39} ${y} ${x} ${y+51} ${x-39} ${y}Z" fill="#00f"/>`).join('');
</script>
</body>
</html>
